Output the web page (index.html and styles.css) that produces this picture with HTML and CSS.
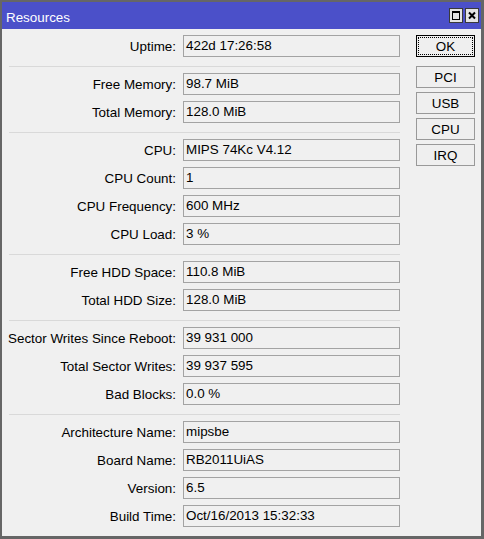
FILE: index.html
```html
<!DOCTYPE html>
<html lang="en">
<head>
    <meta charset="UTF-8">
    <title>Resources</title>
    <link rel="stylesheet" href="styles.css">
</head>
<body>
    <div class="window">
        <div class="titlebar">
            <span class="title">Resources</span>
            <div class="title-buttons">
                <span class="title-btn">
                    <svg width="14" height="15" viewBox="0 0 14 15">
                        <rect x="0.5" y="0.5" width="13" height="14" fill="#e4e4e4" stroke="#3a3a3a"/>
                        <rect x="3.5" y="3.5" width="7" height="8" fill="none" stroke="#000"/>
                        <line x1="3" y1="4.5" x2="11" y2="4.5" stroke="#000"/>
                    </svg>
                </span>
                <span class="title-btn">
                    <svg width="14" height="15" viewBox="0 0 14 15">
                        <rect x="0.5" y="0.5" width="13" height="14" fill="#e4e4e4" stroke="#3a3a3a"/>
                        <path d="M4 4.5 L10 10.5 M10 4.5 L4 10.5" stroke="#000" stroke-width="2"/>
                    </svg>
                </span>
            </div>
        </div>

        <div class="content">
            <div class="form">
                <div class="section">
                    <div class="row"><span class="label">Uptime:</span><div class="field">422d 17:26:58</div></div>
                </div>
                <div class="section">
                    <div class="row"><span class="label">Free Memory:</span><div class="field">98.7 MiB</div></div>
                    <div class="row"><span class="label">Total Memory:</span><div class="field">128.0 MiB</div></div>
                </div>
                <div class="section">
                    <div class="row"><span class="label">CPU:</span><div class="field">MIPS 74Kc V4.12</div></div>
                    <div class="row"><span class="label">CPU Count:</span><div class="field">1</div></div>
                    <div class="row"><span class="label">CPU Frequency:</span><div class="field">600 MHz</div></div>
                    <div class="row"><span class="label">CPU Load:</span><div class="field">3 %</div></div>
                </div>
                <div class="section">
                    <div class="row"><span class="label">Free HDD Space:</span><div class="field">110.8 MiB</div></div>
                    <div class="row"><span class="label">Total HDD Size:</span><div class="field">128.0 MiB</div></div>
                </div>
                <div class="section">
                    <div class="row"><span class="label">Sector Writes Since Reboot:</span><div class="field">39 931 000</div></div>
                    <div class="row"><span class="label">Total Sector Writes:</span><div class="field">39 937 595</div></div>
                    <div class="row"><span class="label">Bad Blocks:</span><div class="field">0.0 %</div></div>
                </div>
                <div class="section">
                    <div class="row"><span class="label">Architecture Name:</span><div class="field">mipsbe</div></div>
                    <div class="row"><span class="label">Board Name:</span><div class="field">RB2011UiAS</div></div>
                    <div class="row"><span class="label">Version:</span><div class="field">6.5</div></div>
                    <div class="row"><span class="label">Build Time:</span><div class="field">Oct/16/2013 15:32:33</div></div>
                </div>
            </div>

            <div class="actions">
                <button class="btn btn-default">OK</button>
                <button class="btn btn-first">PCI</button>
                <button class="btn">USB</button>
                <button class="btn">CPU</button>
                <button class="btn">IRQ</button>
            </div>
        </div>
    </div>
</body>
</html>
```

FILE: styles.css
```css
* {
    margin: 0;
    padding: 0;
    box-sizing: border-box;
}

body {
    font-family: "Liberation Sans", Arial, sans-serif;
    font-size: 13.4px;
    color: #000;
    background: #f0f0f0;
}

.window {
    width: 484px;
    height: 539px;
    background: #f0f0f0;
    border-style: solid;
    border-color: #666;
    border-width: 2px 3px 3px 2px;
}

.titlebar {
    height: 27px;
    background: #4b50c9;
    display: flex;
    justify-content: space-between;
}

.title {
    color: #fff;
    padding: 4px 0 0 4px;
    line-height: 23px;
}

.title-buttons {
    display: flex;
    gap: 2px;
    padding-top: 6px;
    margin-right: 2px;
}

.title-btn {
    display: block;
    width: 14px;
    height: 15px;
}

.title-btn svg {
    display: block;
}

.content {
    display: flex;
    padding-top: 6px;
}

/* flex column so row and section margins don't collapse */
.form {
    display: flex;
    flex-direction: column;
    padding-left: 7px;
    width: 398px;
}

.section {
    padding-bottom: 3px;
}

.section + .section {
    border-top: 1px solid #d9d9d9;
    padding-top: 6px;
}

.row {
    display: flex;
    height: 22px;
    margin-bottom: 6px;
}

.label {
    width: 168px;
    display: flex;
    justify-content: flex-end;
    align-items: center;
    white-space: nowrap;
    padding-right: 1px;
}

.field {
    margin-left: 6px;
    width: 217px;
    height: 22px;
    border: 1px solid #a3a3a3;
    padding: 0 2px;
    line-height: 20px;
    white-space: nowrap;
}

.actions {
    display: flex;
    flex-direction: column;
    gap: 4px;
    padding-left: 16px;
}

.btn {
    width: 59px;
    height: 22px;
    border: 1px solid #999;
    background: #efefef;
    font-family: inherit;
    font-size: 13.4px;
    color: #000;
}

.btn-default {
    border-color: #000;
    outline: 1px dotted #000;
    outline-offset: -3px;
}

.btn-first {
    margin-top: 5px;
}
```
